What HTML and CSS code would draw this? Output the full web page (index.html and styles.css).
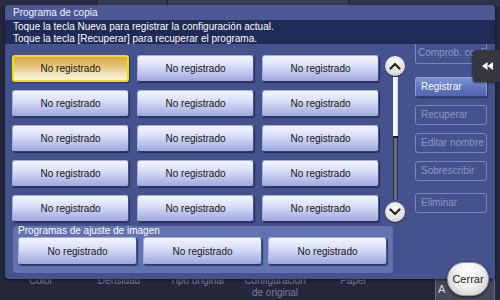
FILE: index.html
```html
<!DOCTYPE html>
<html lang="es">
<head>
<meta charset="utf-8">
<title>Programa de copia</title>
<link rel="stylesheet" href="styles.css">
</head>
<body>
<div class="screen">
  <div class="top-strip">
    <div class="strip-box strip-a"></div>
    <div class="strip-box strip-b"></div>
    <div class="strip-box strip-c"></div>
    <div class="strip-box strip-d"></div>
  </div>
  <div class="spacer"></div>
  <div class="nav">
    <div class="nav-item">Color</div>
    <div class="nav-item">Densidad</div>
    <div class="nav-item">Tipo original</div>
    <div class="nav-item">Configuración<br>de original</div>
    <div class="nav-item">Papel</div>
    <div class="nav-btn">A</div>
  </div>
</div>

<div class="dialog">
  <div class="title">Programa de copia</div>
  <div class="info">
    <div>Toque la tecla Nueva para registrar la configuración actual.</div>
    <div>Toque la tecla [Recuperar] para recuperar el programa.</div>
  </div>
  <div class="content">
    <div class="left">
      <div class="upper">
        <div class="grid">
          <button class="prog selected">No registrado</button>
          <button class="prog">No registrado</button>
          <button class="prog">No registrado</button>
          <button class="prog">No registrado</button>
          <button class="prog">No registrado</button>
          <button class="prog">No registrado</button>
          <button class="prog">No registrado</button>
          <button class="prog">No registrado</button>
          <button class="prog">No registrado</button>
          <button class="prog">No registrado</button>
          <button class="prog">No registrado</button>
          <button class="prog">No registrado</button>
          <button class="prog">No registrado</button>
          <button class="prog">No registrado</button>
          <button class="prog">No registrado</button>
        </div>
        <div class="scroll">
          <div class="arrow">
            <svg width="12" height="8" viewBox="0 0 12 8"><path d="M1.5 6.5 L6 2 L10.5 6.5" fill="none" stroke="#222" stroke-width="2.2" stroke-linecap="round" stroke-linejoin="round"/></svg>
          </div>
          <div class="track"><div class="thumb"></div></div>
          <div class="arrow">
            <svg width="12" height="8" viewBox="0 0 12 8"><path d="M1.5 1.5 L6 6 L10.5 1.5" fill="none" stroke="#222" stroke-width="2.2" stroke-linecap="round" stroke-linejoin="round"/></svg>
          </div>
        </div>
      </div>
      <div class="group">
        <div class="group-label">Programas de ajuste de imagen</div>
        <div class="group-row">
          <button class="prog tall">No registrado</button>
          <button class="prog tall">No registrado</button>
          <button class="prog tall">No registrado</button>
        </div>
      </div>
    </div>
    <div class="side">
      <div class="sbtn off cut">Comprob. config.</div>
      <div class="sbtn on reg">Registrar</div>
      <div class="sbtn off gap8">Recuperar</div>
      <div class="sbtn off gap8">Editar nombre</div>
      <div class="sbtn off gap8">Sobrescribir</div>
      <div class="sbtn off gap12">Eliminar</div>
    </div>
  </div>
</div>

<div class="tab">
  <svg width="11" height="8" viewBox="0 0 11 8"><path d="M0 4 L5.5 0 L5.5 8 Z M5.5 4 L11 0 L11 8 Z" fill="#fff"/></svg>
</div>

<button class="close">Cerrar</button>
</body>
</html>
```

FILE: styles.css
```css
* { box-sizing: border-box; }

html, body {
  margin: 0;
  padding: 0;
}

body {
  width: 500px;
  height: 300px;
  overflow: hidden;
  background: #24263c;
  font-family: "Liberation Sans", Arial, sans-serif;
  position: relative;
}

.screen {
  height: 300px;
  display: flex;
  flex-direction: column;
}

.top-strip {
  height: 6px;
  display: flex;
  gap: 2px;
}

.strip-box {
  height: 6px;
  background: #2c2f48;
}

.strip-a { width: 96px; background: #2a2d44; }
.strip-b { width: 68px; background: #363a52; }
.strip-c { width: 180px; background: #3a3d55; }
.strip-d { width: 150px; background: #30334b; }

.spacer { flex: 1; }

.nav {
  height: 26px;
  display: flex;
  padding-left: 2px;
  color: #7c7f99;
  font-size: 10px;
  line-height: 12px;
}

.nav-item {
  width: 78px;
  text-align: center;
  padding-top: 1px;
}

.nav-btn {
  margin-left: auto;
  margin-right: 5px;
  margin-top: 3px;
  width: 60px;
  height: 23px;
  border: 1px solid #6a6c80;
  border-bottom: none;
  border-radius: 3px 3px 0 0;
  background: #46485a;
  color: #d8d8e0;
  font-size: 11px;
  line-height: 11px;
  padding: 6px 0 0 2px;
}

/* dialog */
.dialog {
  position: absolute;
  left: 5px;
  top: 5px;
  width: 490px;
  height: 274px;
  background: #44528e;
  border-radius: 4px;
  box-shadow: 0 1px 3px rgba(0, 0, 0, 0.6);
}

.title {
  height: 15px;
  padding-left: 8px;
  background: #4b5894;
  color: #f0f2ff;
  font-size: 10px;
  line-height: 15px;
  border-radius: 4px 4px 0 0;
}

.info {
  height: 24px;
  padding: 1px 8px 0;
  background: #1f2a57;
  color: #ffffff;
  font-size: 10px;
  line-height: 11.5px;
}

.content {
  display: flex;
  padding: 0 8px 0 7px;
}

.left {
  display: flex;
  flex-direction: column;
  padding-top: 11px;
}

.upper {
  display: flex;
  gap: 6px;
}

.grid {
  display: grid;
  grid-template-columns: repeat(3, 117px);
  grid-auto-rows: 27px;
  gap: 8px;
}

.prog {
  margin: 0;
  padding: 0;
  font-family: "Liberation Sans", Arial, sans-serif;
  font-size: 10px;
  color: #141414;
  border: 1px solid #a7aedb;
  border-bottom-color: #30376a;
  border-right-color: #4a5186;
  border-radius: 3px;
  background: linear-gradient(#f3f5ff 0%, #dde2fb 35%, #b7bee9 75%, #a0a8dc 100%);
  box-shadow: 1px 1px 1px rgba(10, 14, 40, 0.55);
}

.prog.selected {
  border: 2px solid #f0df00;
  background: linear-gradient(#d7a94a 0%, #e6c47c 40%, #f2e4c0 75%, #f8f1e0 100%);
  box-shadow: 1px 1px 1px rgba(10, 14, 40, 0.45);
}

.prog.tall {
  width: 119px;
  height: 28px;
}

/* scrollbar */
.scroll {
  width: 20px;
  display: flex;
  flex-direction: column;
  align-items: center;
}

.arrow {
  width: 20px;
  height: 20px;
  border-radius: 50%;
  background: radial-gradient(circle at 50% 35%, #fbfbfb 0%, #e4e4e4 55%, #bdbdbd 100%);
  box-shadow: 0 1px 1px rgba(0, 0, 0, 0.5);
  display: flex;
  align-items: center;
  justify-content: center;
  flex: none;
}

.arrow:first-child { margin-top: 1px; }

.track {
  flex: 1;
  width: 5px;
  margin: 1px 0 2px;
  background: #6a6c7c;
  border-left: 1px solid #2a2c3c;
  border-right: 1px solid #2a2c3c;
}

.thumb {
  height: 61px;
  background: linear-gradient(90deg, #e8e8ee, #ffffff 50%, #d4d4dc);
  border-bottom: 2px solid #1c1e2c;
  margin: 0 -1px;
}

/* group */
.group {
  margin-top: 4px;
  margin-left: 1px;
  width: 380px;
  padding: 0 6px 8px 5px;
  background: #6373b1;
  border-radius: 4px;
}

.group-label {
  height: 11px;
  color: #ffffff;
  font-size: 10px;
  line-height: 10px;
}

.group-row {
  display: flex;
  gap: 6px;
}

/* side buttons */
.side {
  width: 72px;
  margin-left: 10px;
  display: flex;
  flex-direction: column;
}

.sbtn {
  height: 20px;
  padding-left: 5px;
  font-size: 10px;
  line-height: 18px;
  border-radius: 3px;
  white-space: nowrap;
}

.sbtn.off {
  border: 1px solid #7c86b6;
  color: #8e97c4;
}

.sbtn.cut {
  border-top: none;
  border-radius: 0 0 3px 3px;
  padding-left: 2px;
  line-height: 17px;
}

.sbtn.on {
  border: 1px solid #8da0dc;
  border-bottom-color: #34407a;
  background: linear-gradient(#7f94d8, #5e72ba 60%, #5266ad);
  color: #ffffff;
  box-shadow: 1px 1px 1px rgba(10, 14, 40, 0.5);
}

.sbtn.reg { margin-top: 13px; }
.sbtn.gap8 { margin-top: 8px; }
.sbtn.gap12 { margin-top: 12px; }

/* overlays */
.tab {
  position: absolute;
  left: 473px;
  top: 50px;
  width: 27px;
  height: 32px;
  background: #36363f;
  border-radius: 4px 0 0 4px;
  box-shadow: -1px 1px 2px rgba(0, 0, 0, 0.5);
  display: flex;
  align-items: center;
  justify-content: center;
  padding-left: 2px;
}

.close {
  position: absolute;
  left: 447px;
  top: 262px;
  width: 42px;
  height: 34px;
  margin: 0;
  padding: 0;
  border: 1px solid #9a9a9a;
  border-radius: 17px;
  background: radial-gradient(ellipse at 50% 30%, #ffffff 0%, #ececec 50%, #c4c4c4 100%);
  box-shadow: 0 1px 3px rgba(0, 0, 0, 0.6);
  font-family: "Liberation Sans", Arial, sans-serif;
  font-size: 11px;
  color: #1a1a1a;
}
```
